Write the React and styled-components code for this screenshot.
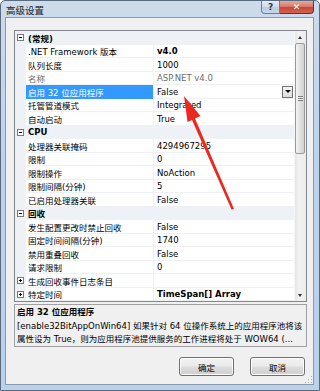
import React from 'react';
import styled, { createGlobalStyle } from 'styled-components';

const GlobalStyle = createGlobalStyle`
  html, body {
    margin: 0;
    padding: 0;
  }
  body {
    width: 320px;
    height: 391px;
    overflow: hidden;
    font-family: "DejaVu Sans", "Noto Sans CJK SC", sans-serif;
    font-size: 8.5px;
    color: #000;
  }
`;

const Window = styled.div`
  position: relative;
  width: 320px;
  height: 391px;
  box-sizing: border-box;
  border: 1px solid #5a6b80;
  border-radius: 5px 5px 0 0;
  background: linear-gradient(to bottom, #cddbea 0%, #bed3ea 40%, #b9d1ea 100%);
  display: flex;
  flex-direction: column;
  overflow: hidden;
`;

const TitleBar = styled.div`
  height: 16px;
  display: flex;
  align-items: flex-start;
  padding-left: 5px;
  flex-shrink: 0;
`;

const TitleText = styled.div`
  padding-top: 3px;
  font-size: 9.5px;
  line-height: 12px;
  font-family: "Noto Sans CJK SC", sans-serif;
  color: #1a1a1a;
`;

const Captions = styled.div`
  margin-left: auto;
  margin-right: 5px;
  display: flex;
`;

const CaptionButton = styled.div`
  width: ${p => (p.$close ? 34 : 19)}px;
  height: 13px;
  box-sizing: border-box;
  border: 1px solid ${p => (p.$close ? '#6e2d26' : '#6d7f95')};
  border-top: none;
  border-left: ${p => (p.$close ? 'none' : '1px solid #6d7f95')};
  border-radius: ${p => (p.$close ? '0 0 4px 0' : '0 0 0 4px')};
  background: ${p =>
    p.$close
      ? 'linear-gradient(to bottom, #e8a99e 0%, #d87a6b 45%, #c7463a 55%, #d2654f 100%)'
      : 'linear-gradient(to bottom, #e3ebf4 0%, #d2deeb 45%, #bccbdc 55%, #c9d7e6 100%)'};
  display: flex;
  align-items: center;
  justify-content: center;
  color: ${p => (p.$close ? '#fff' : '#2b3a4c')};
  font-family: "DejaVu Sans", sans-serif;
  font-size: 9px;
  font-weight: bold;
  line-height: 1;
`;

const Client = styled.div`
  position: relative;
  flex: 1;
  margin: 0 5px 5px 4px;
  background: #f0f0f0;
  border: 1px solid #8a98aa;
  padding: 12px 6px 0 8px;
  display: flex;
  flex-direction: column;
`;

const Grid = styled.div`
  height: 272px;
  box-sizing: border-box;
  border: 1px solid #828790;
  background: #fff;
  display: flex;
`;

const Rows = styled.div`
  flex: 1;
  display: grid;
  grid-template-rows: repeat(20, 1fr);
`;

const Row = styled.div`
  display: grid;
  grid-template-columns: 11px 128px 1fr;
  align-items: stretch;
  background: ${p => (p.$category ? '#eef1f6' : '#fff')};
  box-shadow: inset 0 -1px 0 ${p => (p.$category ? '#eef1f6' : '#eef0f3')};
`;

const Gutter = styled.div`
  background: #eef1f6;
  display: flex;
  align-items: center;
  justify-content: center;
`;

const ToggleBox = styled.div`
  position: relative;
  width: 7px;
  height: 7px;
  box-sizing: border-box;
  border: 1px solid #7a7a7a;
  background: #fff;

  &::before {
    content: '';
    position: absolute;
    left: 1px;
    top: 2px;
    width: 3px;
    height: 1px;
    background: #000;
  }

  &::after {
    content: '';
    display: ${p => (p.$plus ? 'block' : 'none')};
    position: absolute;
    left: 2px;
    top: 1px;
    width: 1px;
    height: 3px;
    background: #000;
  }
`;

const NameCell = styled.div`
  display: flex;
  align-items: center;
  padding-left: 2px;
  white-space: nowrap;
  overflow: hidden;
  background: ${p => (p.$selected ? '#3399ff' : 'transparent')};
  color: ${p => (p.$selected ? '#fff' : p.$muted ? '#6d6d6d' : '#000')};
  font-weight: ${p => (p.$bold ? 'bold' : 'normal')};
  box-shadow: ${p => (p.$category ? 'none' : 'inset -1px 0 0 #eef0f3')};
`;

const ValueCell = styled.div`
  display: flex;
  align-items: center;
  padding-left: 3px;
  white-space: nowrap;
  overflow: hidden;
  color: ${p => (p.$muted ? '#6d6d6d' : '#000')};
  font-weight: ${p => (p.$bold ? 'bold' : 'normal')};
`;

const DropButton = styled.div`
  margin-left: auto;
  margin-right: 1px;
  width: 11px;
  height: 12px;
  box-sizing: border-box;
  border: 1px solid #707070;
  background: linear-gradient(to bottom, #f6f6f6, #dcdcdc);
  display: flex;
  align-items: center;
  justify-content: center;

  &::after {
    content: '';
    border-left: 3px solid transparent;
    border-right: 3px solid transparent;
    border-top: 3px solid #000;
  }
`;

const ScrollBar = styled.div`
  width: 12px;
  background: linear-gradient(to right, #e3e3e3, #f1f1f1 40%, #ececec);
  box-shadow: inset 1px 0 0 #f6f6f6;
  display: flex;
  flex-direction: column;
`;

const ScrollArrow = styled.div`
  height: 12px;
  display: flex;
  align-items: center;
  justify-content: center;
  flex-shrink: 0;

  &::after {
    content: '';
    border-left: 2.5px solid transparent;
    border-right: 2.5px solid transparent;
    ${p => (p.$down ? 'border-top: 3px solid #333;' : 'border-bottom: 3px solid #333;')}
  }
`;

const Track = styled.div`
  flex: 1;
  padding: 0 1px;
`;

const Thumb = styled.div`
  height: 111px;
  box-sizing: border-box;
  border: 1px solid #9a9a9a;
  border-radius: 2px;
  background: linear-gradient(to right, #f3f3f3, #dedede 60%, #d2d2d2);
  display: flex;
  align-items: center;
  justify-content: center;
`;

const Grip = styled.div`
  width: 5px;
  height: 5px;
  background: repeating-linear-gradient(to bottom, #7a7a7a 0 1px, #f2f2f2 1px 2px);
`;

const Description = styled.div`
  margin-top: 2px;
  height: 43px;
  box-sizing: border-box;
  border: 1px solid #a0a0a0;
  padding: 1px 2px 0 2px;
  line-height: 13.5px;
  overflow: hidden;
`;

const DescTitle = styled.div`
  font-weight: bold;
  white-space: nowrap;
`;

const DescLine = styled.div`
  white-space: nowrap;
  overflow: hidden;
`;

const ButtonRow = styled.div`
  margin-top: 10px;
  margin-right: 2px;
  display: flex;
  justify-content: flex-end;
  gap: 16px;
`;

const Button = styled.button`
  width: 55px;
  height: 19px;
  box-sizing: border-box;
  border: 1px solid #707070;
  border-radius: 3px;
  background: linear-gradient(to bottom, #f2f2f2 0%, #ebebeb 48%, #dddddd 52%, #cfcfcf 100%);
  box-shadow: inset 0 0 0 1px #fcfcfc;
  font-family: "Noto Sans CJK SC", sans-serif;
  font-size: 8.5px;
  color: #000;
  padding: 0;
`;

const ResizeGrip = styled.div`
  position: absolute;
  right: 1px;
  bottom: 1px;
  width: 8px;
  height: 8px;
  background:
    radial-gradient(circle, #a8a8a8 0.6px, transparent 0.9px) 0 0 / 3px 3px;
  clip-path: polygon(100% 0, 100% 100%, 0 100%);
`;

const Overlay = styled.svg`
  position: absolute;
  left: 0;
  top: 0;
  pointer-events: none;
`;

const rows = [
  { category: '(常规)' },
  { name: '.NET Framework 版本', value: 'v4.0', bold: true },
  { name: '队列长度', value: '1000' },
  { name: '名称', value: 'ASP.NET v4.0', muted: true },
  { name: '启用 32 位应用程序', value: 'False', selected: true },
  { name: '托管管道模式', value: 'Integrated' },
  { name: '自动启动', value: 'True' },
  { category: 'CPU' },
  { name: '处理器关联掩码', value: '4294967295' },
  { name: '限制', value: '0' },
  { name: '限制操作', value: 'NoAction' },
  { name: '限制间隔(分钟)', value: '5' },
  { name: '已启用处理器关联', value: 'False' },
  { category: '回收' },
  { name: '发生配置更改时禁止回收', value: 'False' },
  { name: '固定时间间隔(分钟)', value: '1740' },
  { name: '禁用重叠回收', value: 'False' },
  { name: '请求限制', value: '0' },
  { name: '生成回收事件日志条目', value: '', plus: true },
  { name: '特定时间', value: 'TimeSpan[] Array', bold: true, plus: true },
];

const App = () => {
  return (
    <>
      <GlobalStyle />
      <Window>
        <TitleBar>
          <TitleText>高级设置</TitleText>
          <Captions>
            <CaptionButton>?</CaptionButton>
            <CaptionButton $close>✕</CaptionButton>
          </Captions>
        </TitleBar>
        <Client>
          <Grid>
            <Rows>
              {rows.map((r, i) =>
                r.category ? (
                  <Row key={i} $category>
                    <Gutter>
                      <ToggleBox />
                    </Gutter>
                    <NameCell $bold $category>{r.category}</NameCell>
                    <ValueCell />
                  </Row>
                ) : (
                  <Row key={i}>
                    <Gutter>{r.plus && <ToggleBox $plus />}</Gutter>
                    <NameCell $selected={r.selected} $muted={r.muted}>
                      {r.name}
                    </NameCell>
                    <ValueCell $muted={r.muted} $bold={r.bold}>
                      {r.value}
                      {r.selected && <DropButton />}
                    </ValueCell>
                  </Row>
                )
              )}
            </Rows>
            <ScrollBar>
              <ScrollArrow />
              <Track>
                <Thumb>
                  <Grip />
                </Thumb>
              </Track>
              <ScrollArrow $down />
            </ScrollBar>
          </Grid>
          <Description>
            <DescTitle>启用 32 位应用程序</DescTitle>
            <DescLine>[enable32BitAppOnWin64] 如果针对 64 位操作系统上的应用程序池将该</DescLine>
            <DescLine>属性设为 True，则为应用程序池提供服务的工作进程将处于 WOW64 (...</DescLine>
          </Description>
          <ButtonRow>
            <Button>确定</Button>
            <Button>取消</Button>
          </ButtonRow>
          <ResizeGrip />
        </Client>
        <Overlay width="320" height="391" viewBox="0 0 320 391">
          <polygon
            points="183,95 199.5,115 194,117.5 233,208 230.5,208.5 191,119 186.5,121"
            fill="#ea2a22"
          />
        </Overlay>
      </Window>
    </>
  );
};

export default App;
